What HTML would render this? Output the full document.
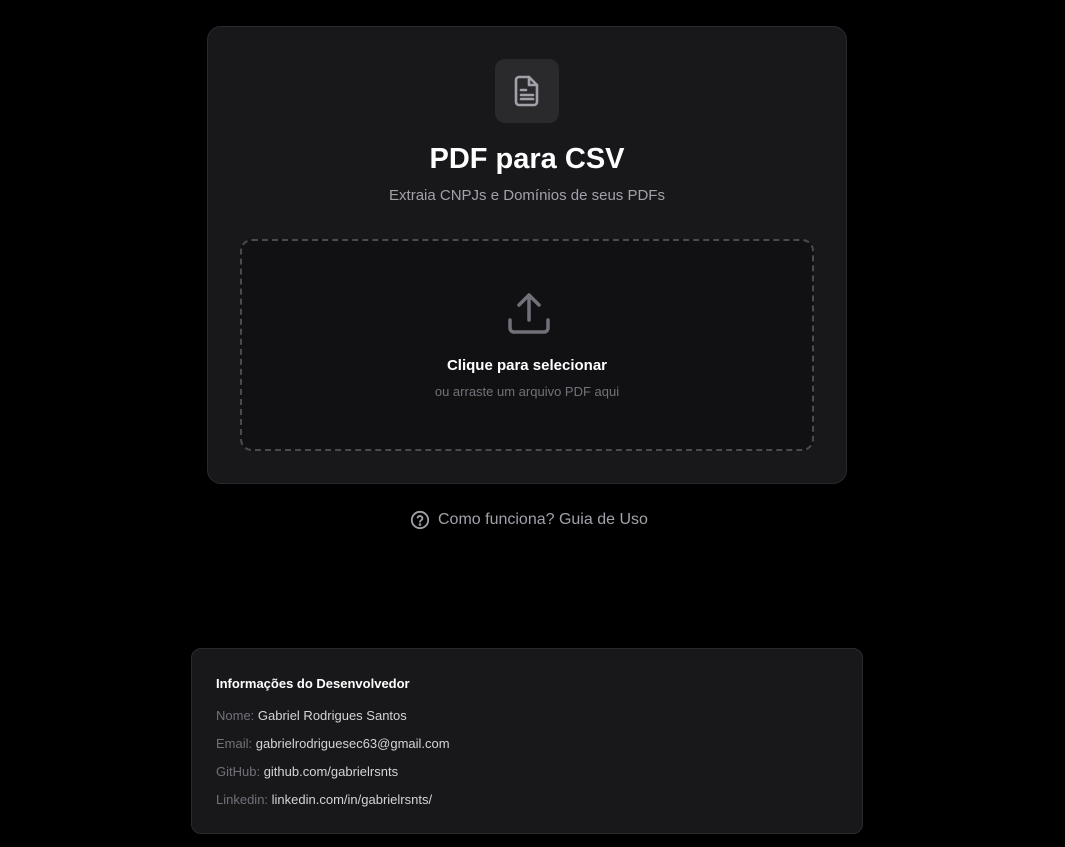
<!DOCTYPE html>
<html><head><meta charset="utf-8"><style>
*{margin:0;padding:0;box-sizing:border-box}
body{width:1065px;height:847px;background:#000;font-family:"Liberation Sans","DejaVu Sans",sans-serif;position:relative;overflow:hidden}
.card{position:absolute;left:207px;top:26px;width:640px;height:458px;background:#18181b;border:1px solid #2a2a2e;border-radius:14px}
.ic{position:absolute;left:287px;top:32px;width:64px;height:64px;background:#2a2a2d;border-radius:10px}
.ic svg{position:absolute;left:19px;top:16px}
h1{position:absolute;left:0;right:0;top:116px;text-align:center;color:#fff;font-size:29px;font-weight:bold}
.sub{position:absolute;left:0;right:0;top:160px;text-align:center;color:#a1a1aa;font-size:15px}
.drop{position:absolute;left:32px;top:212px;width:574px;height:212px;border:2px dashed #4a4a50;border-radius:12px;background:#111114}
.drop svg{position:absolute;left:265px;top:51px}
.t1{position:absolute;left:0;right:0;top:116px;text-align:center;color:#fff;font-size:15px;font-weight:bold}
.t2{position:absolute;left:0;right:0;top:143px;text-align:center;color:#71717a;font-size:13px}
.help{position:absolute;left:410px;top:510px;color:#a1a1aa;font-size:16px;display:flex;align-items:center;gap:8px}
.dev{position:absolute;left:191px;top:648px;width:672px;height:186px;background:#18181b;border:1px solid #2a2a2e;border-radius:10px;padding:27px 24px}
.dev h3{color:#fff;font-size:13px;font-weight:bold;margin-bottom:16px}
.dev p{font-size:13px;color:#d4d4d8;height:28px;line-height:18px}
.dev p span{color:#71717a}
</style></head><body>
<div class="card">
 <div class="ic"><svg width="26" height="32" viewBox="0 0 26 32" fill="none" stroke="#a1a1aa" stroke-width="2.6" stroke-linejoin="round" stroke-linecap="round"><path d="M5 2h10l8 8v17a3 3 0 0 1-3 3H5a3 3 0 0 1-3-3V5a3 3 0 0 1 3-3z"/><path d="M15 2v8h8"/><path d="M7 15h5M7 20h12M7 24h12"/></svg></div>
 <h1>PDF para CSV</h1>
 <div class="sub">Extraia CNPJs e Domínios de seus PDFs</div>
 <div class="drop">
  <svg width="44" height="44" viewBox="0 0 44 44" fill="none" stroke="#71717a" stroke-width="3.5" stroke-linecap="round" stroke-linejoin="round"><path d="M22 4v24M12 13l10-10 10 10"/><path d="M3 28v8a4 4 0 0 0 4 4h30a4 4 0 0 0 4-4v-8"/></svg>
  <div class="t1">Clique para selecionar</div>
  <div class="t2">ou arraste um arquivo PDF aqui</div>
 </div>
</div>
<div class="help"><svg width="20" height="20" viewBox="0 0 20 20" fill="none" stroke="#a1a1aa" stroke-width="1.8" stroke-linecap="round"><circle cx="10" cy="10" r="8.2"/><path d="M7.6 7.6a2.5 2.5 0 0 1 4.8 1c0 1.6-2.4 2-2.4 3.2"/><circle cx="10" cy="14.6" r=".4" fill="#a1a1aa"/></svg>Como funciona? Guia de Uso</div>
<div class="dev">
 <h3>Informações do Desenvolvedor</h3>
 <p><span>Nome:</span> Gabriel Rodrigues Santos</p>
 <p><span>Email:</span> gabrielrodriguesec63@gmail.com</p>
 <p><span>GitHub:</span> github.com/gabrielrsnts</p>
 <p><span>Linkedin:</span> linkedin.com/in/gabrielrsnts/</p>
</div>
</body></html>
